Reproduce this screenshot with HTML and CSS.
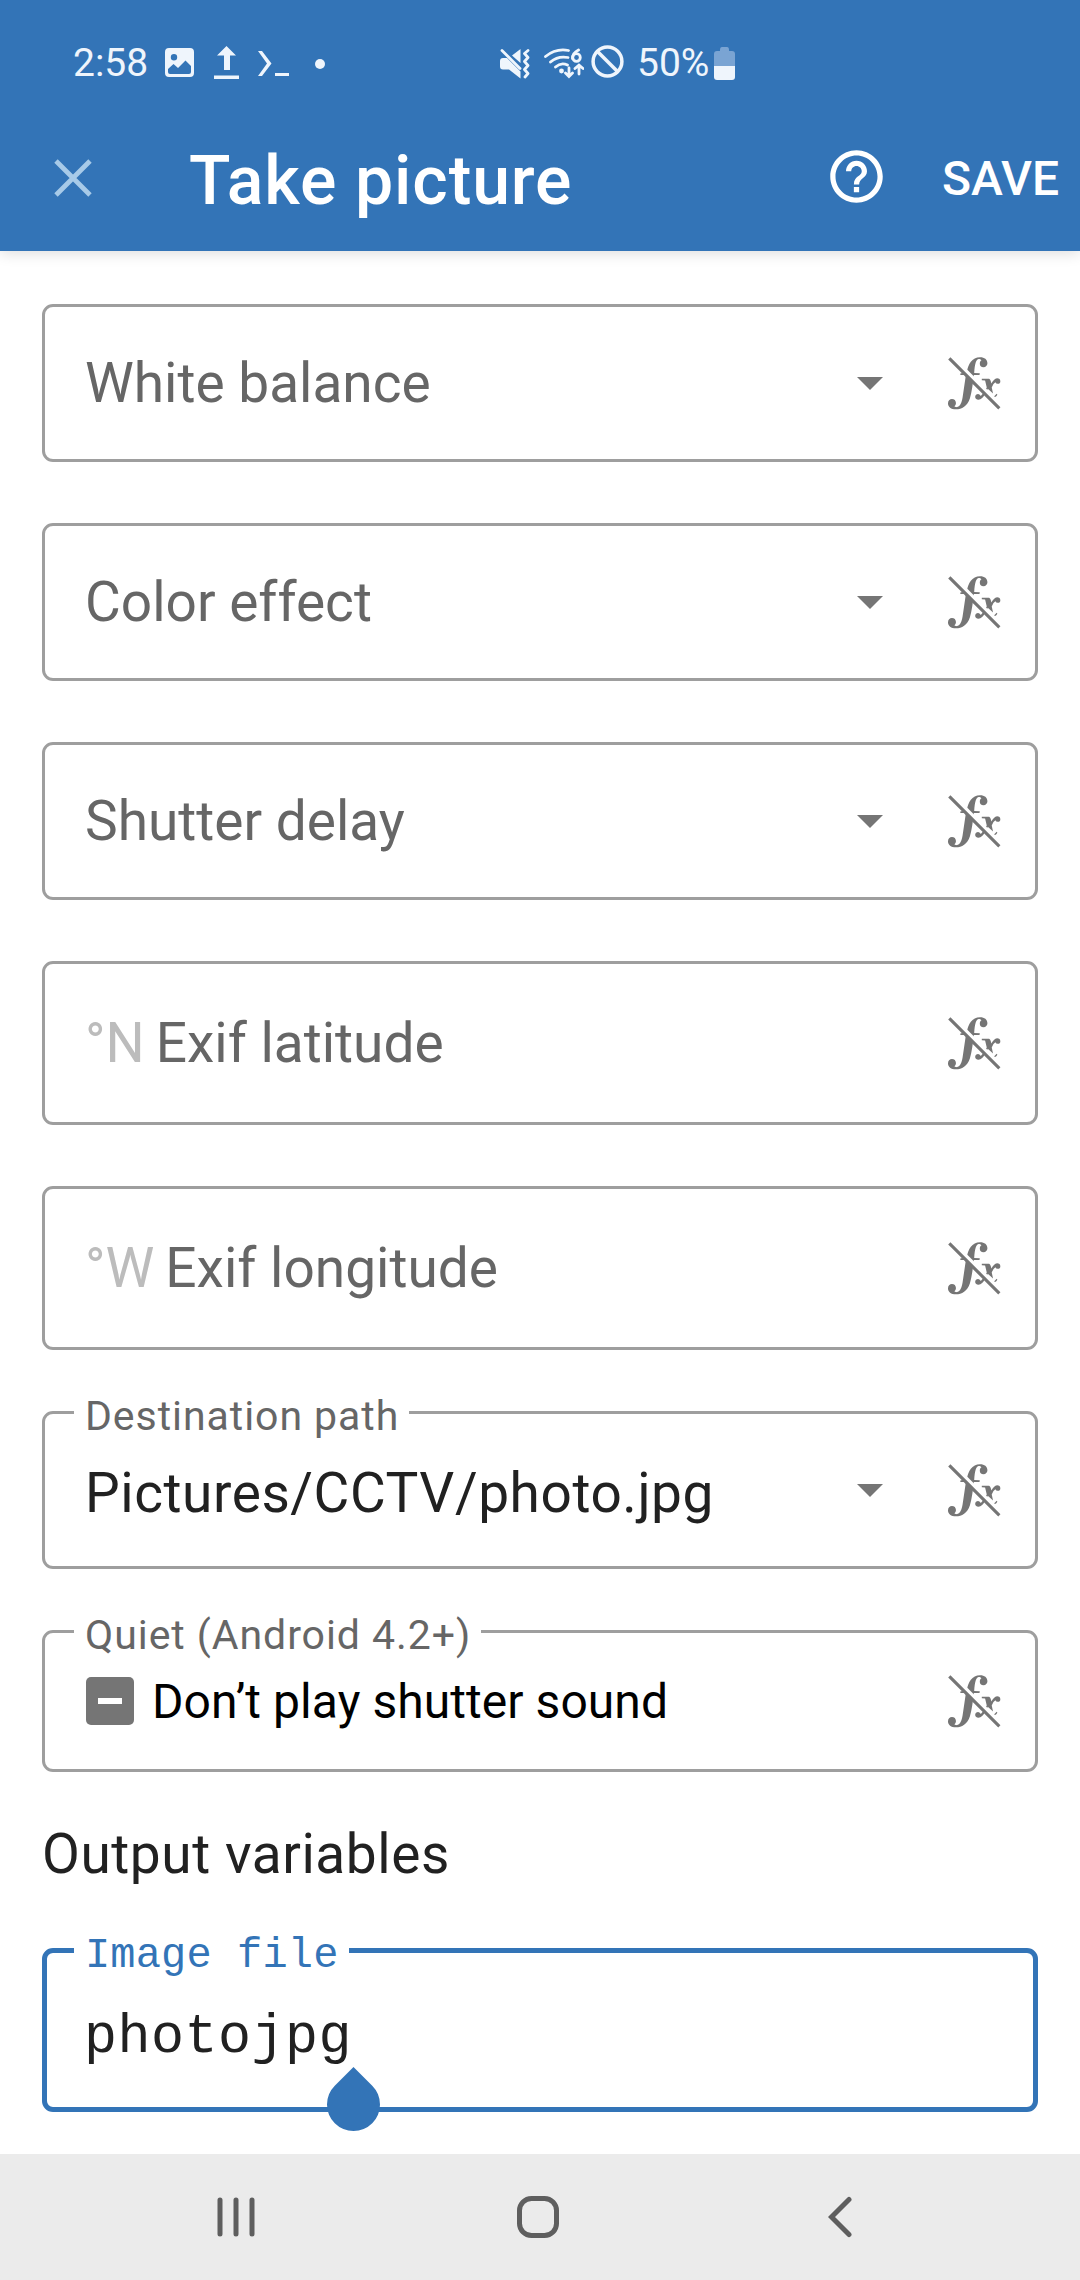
FILE: index.html
```html
<!DOCTYPE html>
<html lang="en">
<head>
<meta charset="utf-8">
<title>Take picture</title>
<link rel="stylesheet" href="styles.css">
</head>
<body>
<svg class="defs" aria-hidden="true">
  <symbol id="fx" viewBox="0 0 160 160">
    <path fill="#757575" d="M97 1C110 1 119 8 119 19C119 26 114 31 107 31C100 31 96 26 96 20C96 15 98 12 101 10C99 7 96 6 93 6C85 7 81 20 79 48L96 49L95 54L78 54C75 80 72 105 66 125C58 148 42 158 24 158C9 158 0 150 0 140C0 132 5 127 12 127C19 127 24 132 24 139C24 144 22 147 19 149C21 151 24 152 27 151C37 149 41 138 44 122L54 54L37 54L38 49L56 48C61 22 72 1 97 1Z"/>
    <path fill="#757575" d="M102 66L124 66Q128 67 131 80Q138 66 148 64Q158 64 158 73Q158 81 150 81Q145 81 143 76Q137 79 132 92L136 110L120 96Q110 118 103 124Q98 129 92 129Q82 128 82 120Q83 112 91 112Q97 113 99 118Q110 108 117 92L112 71L102 70ZM139 119L147 111L149 114Q146 120 142 121Z"/>
    <path stroke="#fff" stroke-width="11" d="M8-4L164 152"/>
    <path stroke="#757575" stroke-width="9.5" d="M4 4L155 155"/>
  </symbol>
  <symbol id="caret" viewBox="0 0 26 13"><path fill="#757575" d="M0 0H26L13 13Z"/></symbol>
</svg>
<header class="top">
  <div class="status">
    <span class="clock">2:58</span>
    <svg class="s-photo" width="29" height="29" viewBox="0 0 29 29"><path fill="currentColor" fill-rule="evenodd" d="M4 0H25Q29 0 29 4V25Q29 29 25 29H4Q0 29 0 25V4Q0 0 4 0ZM9 6A3.2 3.2 0 1 0 9 12.4A3.2 3.2 0 1 0 9 6ZM3 21V24Q3 26 5 26H24Q26 26 26 24V18L20.500 12.500L13 20L8.500 16Z"/></svg>
    <svg class="s-up" width="25" height="33" viewBox="0 0 25 33"><path fill="currentColor" d="M12.500 0L22 9.500H16V24H10V9.500H3ZM0 29.500H25V33H0Z"/></svg>
    <svg class="s-term" width="31" height="26" viewBox="0 0 31 26"><path fill="currentColor" d="M0 0H4L13.500 12.500L4 25H0L9 12.500ZM17 22H31V25H17Z"/></svg>
    <i class="s-dot"></i>
    <svg class="s-mute" width="31" height="30" viewBox="0 0 31 30"><path fill="currentColor" d="M0 12Q0 9 3 9H7L20.500 22.500V29.500L9 20.500H3Q0 20.500 0 17.500ZM12 6.500L20.500 0V14Z"/><path fill="none" stroke="currentColor" stroke-width="2.800" stroke-linecap="round" stroke-linejoin="round" d="M2 1.500L20 19.500M28 1.500L24.500 4.500L28 8.500L24.500 12.500L28 16.500L24.500 20.500L28 24.500L25 28"/></svg>
    <svg class="s-wifi" width="40" height="31" viewBox="0 0 40 31"><g fill="none" stroke="currentColor" stroke-width="2.800" stroke-linecap="round"><path d="M1.500 8.500Q12 0 24.500 2.500M6.500 14Q14 7.500 24 9.500M11.500 19Q17 14 23.500 17M34.500 2Q28.500 5 28.500 10.500M25 20V28M21.500 25L25 28.500L28.500 25M35 26V17.500M31 20.500L35 17L39 20.500"/><circle cx="32.500" cy="9.500" r="3.800"/></g><circle cx="17.500" cy="23" r="2.400" fill="currentColor"/></svg>
    <svg class="s-block" width="33" height="33" viewBox="0 0 33 33"><g fill="none" stroke="currentColor" stroke-width="3.500"><circle cx="16.500" cy="16.500" r="14.400"/><path d="M6.500 6.500L26.500 26.500"/></g></svg>
    <span class="pct">50%</span>
    <svg class="s-batt" width="21" height="33" viewBox="0 0 21 33"><path fill="#7aa4d3" d="M6 3Q6 0 8 0H13Q15 0 15 3V4H18Q21 4 21 7V19H0V7Q0 4 3 4H6Z"/><path fill="currentColor" d="M0 19H21V30Q21 33 18 33H3Q0 33 0 30Z"/></svg>
  </div>
  <div class="bar">
    <svg class="close" width="38" height="38" viewBox="0 0 38 38"><path stroke="#a7cae8" stroke-width="4.800" d="M2 2L36 36M36 2L2 36"/></svg>
    <h1 class="title">Take picture</h1>
    <svg class="help" width="63" height="63" viewBox="0 0 24 24"><path fill="#fff" d="M11 18h2v-2h-2v2zm1-16C6.480 2 2 6.480 2 12s4.480 10 10 10 10-4.480 10-10S17.520 2 12 2zm0 18c-4.410 0-8-3.590-8-8s3.590-8 8-8 8 3.590 8 8-3.590 8-8 8zm0-14c-2.210 0-4 1.790-4 4h2c0-1.100.9-2 2-2s2 .9 2 2c0 2-3 1.750-3 5h2c0-2.250 3-2.500 3-5 0-2.210-1.790-4-4-4z"/></svg>
    <span class="save">SAVE</span>
  </div>
</header>
<main class="form">
  <div class="field"><span class="text">White balance</span><svg class="caret"><use href="#caret"/></svg><svg class="fx"><use href="#fx"/></svg></div>
  <div class="field"><span class="text">Color effect</span><svg class="caret"><use href="#caret"/></svg><svg class="fx"><use href="#fx"/></svg></div>
  <div class="field"><span class="text">Shutter delay</span><svg class="caret"><use href="#caret"/></svg><svg class="fx"><use href="#fx"/></svg></div>
  <div class="field tall"><span class="prefix">°N</span><span class="text">Exif latitude</span><svg class="fx"><use href="#fx"/></svg></div>
  <div class="field tall"><span class="prefix">°W</span><span class="text">Exif longitude</span><svg class="fx"><use href="#fx"/></svg></div>
  <div class="field"><span class="label">Destination path</span><span class="text value">Pictures/CCTV/photo.jpg</span><svg class="caret"><use href="#caret"/></svg><svg class="fx"><use href="#fx"/></svg></div>
  <div class="field short"><span class="label">Quiet (Android 4.2+)</span><i class="check"></i><span class="text option">Don’t play shutter sound</span><svg class="fx"><use href="#fx"/></svg></div>
  <h2 class="section">Output variables</h2>
  <div class="field tall focused"><span class="label">Image file</span><span class="text value">photojpg</span><svg class="handle" width="53" height="64" viewBox="0 0 53 64"><path fill="#3374b7" d="M26.500 0L45.240 18.760A26.500 26.500 0 1 1 7.760 18.760Z"/></svg></div>
</main>
<nav class="nav">
  <svg width="38" height="42" viewBox="0 0 38 42"><path stroke="#5e5e5e" stroke-width="5" stroke-linecap="round" d="M3 4V38M19 4V38M35 4V38"/></svg>
  <svg class="home" width="42" height="42" viewBox="0 0 42 42"><rect x="2.500" y="2.500" width="37" height="37" rx="12" fill="none" stroke="#5e5e5e" stroke-width="5"/></svg>
  <svg width="24" height="42" viewBox="0 0 24 42"><path fill="none" stroke="#5e5e5e" stroke-width="5" stroke-linecap="round" d="M21 3.500L3.500 21L21 38.500"/></svg>
</nav>
</body>
</html>
```
FILE: styles.css
```css
* { box-sizing: border-box; }
body {
  margin: 0;
  width: 1080px;
  height: 2280px;
  overflow: hidden;
  display: flex;
  flex-direction: column;
  background: #fff;
  font-family: Roboto, sans-serif;
}
svg { display: block; flex: none; }
.defs { display: none; }
.top {
  height: 251px;
  flex: none;
  background: #3374b7;
  box-shadow: 0 2px 14px rgba(0, 0, 0, .14);
}
.status {
  height: 125px;
  padding-left: 73px;
  display: flex;
  align-items: center;
  color: #eff5fc;
  font-size: 39px;
}
.clock { width: 92px; }
.s-up { margin-left: 20px; }
.s-term { margin-left: 19px; margin-top: 3px; }
.s-dot {
  width: 10px;
  height: 10px;
  margin-left: 26px;
  margin-top: 2px;
  border-radius: 50%;
  background: currentColor;
}
.s-mute { margin-left: 175px; margin-top: 2px; }
.s-wifi { margin-left: 13px; margin-top: 1px; }
.s-block { margin-left: 7px; margin-top: -2px; }
.pct { margin-left: 13px; width: 77px; }
.s-batt { margin-top: 2px; }
.bar {
  height: 105px;
  display: flex;
  align-items: center;
  color: #fff;
  font-weight: 500;
}
.close { margin-left: 54px; }
.title {
  margin: 6px 0 0 97px;
  width: 636px;
  font-size: 68px;
  font-weight: 500;
  line-height: 80px;
  letter-spacing: .85px;
}
.help { margin-top: -2px; }
.save { margin-left: 54px; margin-top: 1px; font-size: 48px; }
.form {
  flex: 1;
  min-height: 0;
  padding: 53px 42px 0;
  display: flex;
  flex-direction: column;
}
.field {
  position: relative;
  height: 158px;
  flex: none;
  margin-bottom: 61px;
  padding: 0 34px 0 40px;
  border: 3px solid #9e9e9e;
  border-radius: 11px;
  display: flex;
  align-items: center;
  color: #666;
  font-size: 55px;
  line-height: 64px;
}
.tall { height: 164px; }
.short { height: 142px; padding-left: 41px; }
.text { flex: 1; white-space: nowrap; }
.prefix { margin-right: 11px; color: #bcbcbc; }
.value { padding-top: 6px; color: #212121; letter-spacing: .56px; }
.option { margin-left: 18px; padding-top: 2px; color: #000; font-size: 48px; letter-spacing: .06px; }
.caret { width: 26px; height: 13px; margin-right: 65px; }
.fx { width: 53px; height: 53px; }
.label {
  position: absolute;
  left: 29px;
  top: -22px;
  padding: 0 10px 0 11px;
  background: #fff;
  font-size: 41px;
  line-height: 48px;
  letter-spacing: .95px;
}
.check {
  width: 48px;
  height: 48px;
  border-radius: 5px;
  background: linear-gradient(#fff, #fff) center / 24px 6px no-repeat #757575;
}
.section {
  margin: -11px 0 62px;
  font-size: 55px;
  font-weight: 400;
  line-height: 64px;
  letter-spacing: .56px;
  color: #212121;
}
.focused {
  margin-bottom: 0;
  padding-left: 37px;
  border: 5px solid #3374b7;
  font-family: "Liberation Mono", monospace;
}
.focused .label {
  left: 27px;
  top: -21px;
  color: #3374b7;
  font-size: 42px;
  letter-spacing: .15px;
}
.focused .value { padding-top: 15px; letter-spacing: .5px; }
.handle { position: absolute; left: 280px; top: 114px; }
.nav {
  height: 126px;
  flex: none;
  padding: 0 228px 0 217px;
  display: flex;
  align-items: center;
  justify-content: space-between;
  background: #ebebeb;
}
.home { margin-right: 8px; }
```
